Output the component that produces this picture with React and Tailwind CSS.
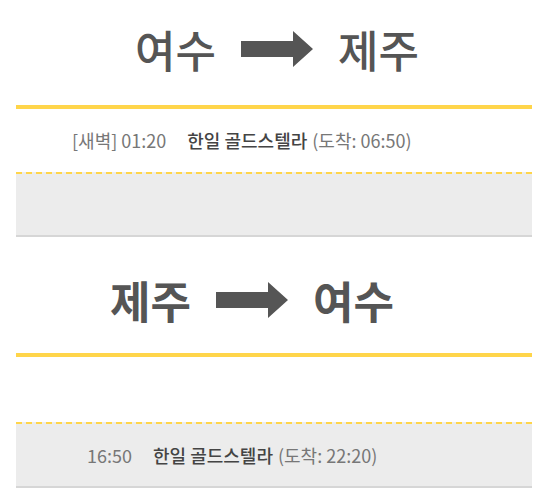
import React from "react";

function Arrow() {
  return (
    <svg width="72" height="36" viewBox="0 0 72 36" className="shrink-0">
      <path d="M0 10 H52 V0 L72 18 L52 36 V26 H0 Z" fill="#555555" />
    </svg>
  );
}

export default function App() {
  const font = { fontFamily: '"Noto Sans CJK KR", "Noto Sans", sans-serif' };
  return (
    <div className="w-[542px] h-[500px] bg-white" style={font}>
      <div className="mx-[16px] w-[516px]">
        {/* section 1 */}
        <div className="h-[105px] flex items-center">
          <div className="pl-[119px] flex items-center text-[44px] font-medium text-[#555555] leading-none pb-[8px]">
            <span>여수</span>
            <span className="mx-[25px] flex"><Arrow /></span>
            <span>제주</span>
          </div>
        </div>
        <div className="h-[4px] bg-[#ffd54a]" />
        <div className="h-[63px] flex items-center pl-[56px] text-[18px] text-[#777777] bg-white">
          <span>[새벽] 01:20</span>
          <span className="ml-[21px] font-medium text-[#444444]">한일 골드스텔라</span>
          <span className="ml-[5px]">(도착: 06:50)</span>
        </div>
        <div className="h-[65px] bg-[#ececec] border-t-2 border-dashed border-[#ffd54a]" style={{ borderBottom: "2px solid #d6d6d6" }} />

        {/* section 2 */}
        <div className="h-[116px] flex items-center">
          <div className="pl-[94px] flex items-center text-[44px] font-bold text-[#555555] leading-none pt-[10px]">
            <span>제주</span>
            <span className="mx-[25px] flex"><Arrow /></span>
            <span>여수</span>
          </div>
        </div>
        <div className="h-[4px] bg-[#ffd54a]" />
        <div className="h-[65px] bg-white" />
        <div className="h-[66px] flex items-center pl-[71px] text-[18px] text-[#777777] bg-[#ececec] border-t-2 border-dashed border-[#ffd54a]" style={{ borderBottom: "2px solid #d6d6d6" }}>
          <span>16:50</span>
          <span className="ml-[21px] font-medium text-[#444444]">한일 골드스텔라</span>
          <span className="ml-[5px]">(도착: 22:20)</span>
        </div>
      </div>
    </div>
  );
}
